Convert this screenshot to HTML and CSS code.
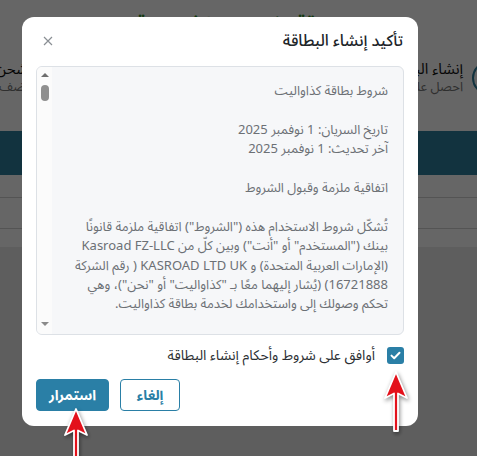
FILE: index.html
```html
<!DOCTYPE html>
<html lang="ar" dir="rtl">
<head>
    <meta charset="UTF-8">
    <meta name="viewport" content="width=device-width, initial-scale=1.0">
    <title>تأكيد إنشاء البطاقة</title>
    <link rel="stylesheet" href="styles.css">
</head>
<body>
    <div class="page">
        <div class="hero">
            <h1 class="hero-title">بطاقة كذاواليت الافتراضية</h1>
            <div class="cards">
                <div class="card">
                    <span class="card-icon"></span>
                    <div>
                        <div class="card-title">إنشاء البطاقة</div>
                        <div class="card-sub">احصل على بطاقتك الآن</div>
                    </div>
                </div>
                <div class="card">
                    <span class="card-icon"></span>
                    <div>
                        <div class="card-title">شحن البطاقة</div>
                        <div class="card-sub">أضف رصيدًا إلى بطاقتك</div>
                    </div>
                </div>
            </div>
        </div>
        <div class="band"></div>
        <div class="table-row row-a"></div>
        <div class="table-row row-b"></div>
        <div class="table-row row-c"></div>
    </div>

    <div class="overlay">
        <div class="modal">
            <div class="modal-header">
                <h2 class="modal-title">تأكيد إنشاء البطاقة</h2>
                <button class="close-btn" aria-label="إغلاق">
                    <svg width="10" height="10" viewBox="0 0 10 10"><path d="M1 1L9 9M9 1L1 9" stroke="#8a8f94" stroke-width="1.2"/></svg>
                </button>
            </div>

            <div class="terms-box">
                <div class="terms-text">
                    <p>شروط بطاقة كذاواليت</p>
                    <p>تاريخ السريان: 1 نوفمبر 2025<br>آخر تحديث: 1 نوفمبر 2025</p>
                    <p>اتفاقية ملزمة وقبول الشروط</p>
                    <p>تُشكّل شروط الاستخدام هذه ("الشروط") اتفاقية ملزمة قانونًا بينك ("المستخدم" أو "أنت") وبين كلّ من Kasroad FZ-LLC (الإمارات العربية المتحدة) و KASROAD LTD UK ( رقم الشركة 16721888) (يُشار إليهما معًا بـ "كذاواليت" أو "نحن")، وهي تحكم وصولك إلى واستخدامك لخدمة بطاقة كذاواليت.</p>
                    <p>يرجى قراءة هذه الشروط بعناية قبل استخدام الخدمة.</p>
                </div>
                <div class="scrollbar">
                    <span class="sb-arrow up"></span>
                    <span class="sb-thumb"></span>
                    <span class="sb-space"></span>
                    <span class="sb-arrow down"></span>
                </div>
            </div>

            <label class="agree">
                <span class="checkbox">
                    <svg width="11" height="9" viewBox="0 0 11 9"><path d="M1.5 4.6L4.2 7.2L9.5 1.8" fill="none" stroke="#fff" stroke-width="2" stroke-linecap="round" stroke-linejoin="round"/></svg>
                </span>
                <span>أوافق على شروط وأحكام إنشاء البطاقة</span>
            </label>

            <div class="actions">
                <button class="btn btn-outline">إلغاء</button>
                <button class="btn btn-primary">استمرار</button>
            </div>
        </div>
    </div>

    <!-- annotation arrows -->
    <svg class="pointer pointer-check" width="28" height="64" viewBox="0 0 28 64">
        <path d="M14 2L25 28L16 23.5L16 61L12 61L12 23.5L3 28Z" fill="#e3111b" stroke="#fff" stroke-width="1.8" stroke-linejoin="round"/>
    </svg>
    <svg class="pointer pointer-continue" width="28" height="64" viewBox="0 0 28 64">
        <path d="M14 2L25 28L16 23.5L16 61L12 61L12 23.5L3 28Z" fill="#e3111b" stroke="#fff" stroke-width="1.8" stroke-linejoin="round"/>
    </svg>
</body>
</html>
```

FILE: styles.css
```css
body {
    margin: 0;
    font-family: "Noto Sans Arabic", "Noto Kufi Arabic", "DejaVu Sans", sans-serif;
    background-color: #ececec;
    overflow: hidden;
}

/* page behind the dialog */
.page {
    width: 100%;
    overflow: hidden;
}
.hero {
    height: 131px;
    background-color: #fff;
    overflow: hidden;
}
.hero-title {
    margin: 12px 0 0;
    font-size: 18px;
    line-height: 24px;
    color: #2f8f2a;
    text-align: center;
}
.cards {
    display: flex;
    margin-top: 24px;
    margin-right: -29px;
}
.card {
    flex: 0 0 435px;
    display: flex;
    align-items: center;
    gap: 9px;
}
.card-icon {
    flex: 0 0 auto;
    width: 30px;
    height: 30px;
    border: 2px solid #2d7f9d;
    border-radius: 50%;
}
.card-title {
    font-size: 15px;
    line-height: 19px;
    color: #111;
    white-space: nowrap;
}
.card-sub {
    font-size: 13px;
    line-height: 17px;
    color: #777;
    white-space: nowrap;
}
.band {
    height: 44px;
    background-color: #2d7f9d;
}
.table-row {
    background-color: #fff;
    border-bottom: 1px solid #d2d2d2;
}
.row-a { height: 22px; }
.row-b { height: 30px; }
.row-c { height: 18px; border-bottom: none; }

/* dialog */
.overlay {
    position: fixed;
    inset: 0;
    background-color: rgba(0, 0, 0, 0.6);
    display: flex;
    justify-content: flex-start;
    align-items: flex-start;
    padding: 17px 0 0 22px;
    direction: ltr;
}
.modal {
    direction: rtl;
    width: 368px;
    padding: 0 14px 15px;
    background-color: #fff;
    border-radius: 12px;
}
.modal-header {
    display: flex;
    align-items: center;
    justify-content: space-between;
    padding: 12px 1px 13px 6px;
}
.modal-title {
    margin: 0;
    font-size: 16px;
    line-height: 24px;
    font-weight: 500;
    color: #212529;
}
.close-btn {
    border: none;
    background: none;
    padding: 0;
    width: 12px;
    height: 12px;
    display: flex;
    align-items: center;
    justify-content: center;
}

.terms-box {
    height: 267px;
    display: flex;
    border: 1px solid #dde1e6;
    border-radius: 6px;
    background-color: #f6f7f9;
    overflow: hidden;
}
.terms-text {
    flex: 1;
    overflow: hidden;
    padding: 15px 15px 0 8px;
    font-size: 13px;
    line-height: 19.4px;
    color: #6c7075;
}
.terms-text p {
    margin: 0 0 19.4px;
}
.scrollbar {
    width: 15px;
    display: flex;
    flex-direction: column;
    align-items: center;
    background-color: #fbfbfb;
}
.sb-arrow {
    width: 0;
    height: 0;
    border-left: 4px solid transparent;
    border-right: 4px solid transparent;
}
.sb-arrow.up {
    margin-top: 6px;
    border-bottom: 4px solid #6e6e6e;
}
.sb-arrow.down {
    margin-bottom: 8px;
    border-top: 4px solid #8a8a8a;
}
.sb-thumb {
    margin-top: 8px;
    width: 8px;
    height: 16px;
    border-radius: 4px;
    background-color: #8f8f8f;
}
.sb-space {
    flex: 1;
}

.agree {
    display: flex;
    align-items: center;
    gap: 12px;
    margin: 12px 0 0;
    font-size: 14px;
    line-height: 17px;
    color: #2b2f33;
}
.checkbox {
    width: 17px;
    height: 17px;
    border-radius: 3px;
    background-color: #2a7fa6;
    display: flex;
    align-items: center;
    justify-content: center;
}

.actions {
    display: flex;
    gap: 11px;
    margin-top: 15px;
    justify-content: flex-end;
}
.btn {
    height: 32px;
    border-radius: 4px;
    font-family: inherit;
    font-size: 14px;
    font-weight: bold;
    padding: 0;
}
.btn-outline {
    width: 60px;
    background-color: #fff;
    border: 1px solid #2a7fa6;
    color: #2a7fa6;
}
.btn-primary {
    width: 73px;
    background-color: #2a7fa6;
    border: 1px solid #2a7fa6;
    color: #fff;
}

/* red annotation arrows lying over the dialog */
.pointer {
    position: fixed;
    filter: drop-shadow(1px 2px 2px rgba(0, 0, 0, 0.45));
}
.pointer-check {
    left: 382px;
    top: 370px;
}
.pointer-continue {
    left: 62px;
    top: 407px;
}
```
